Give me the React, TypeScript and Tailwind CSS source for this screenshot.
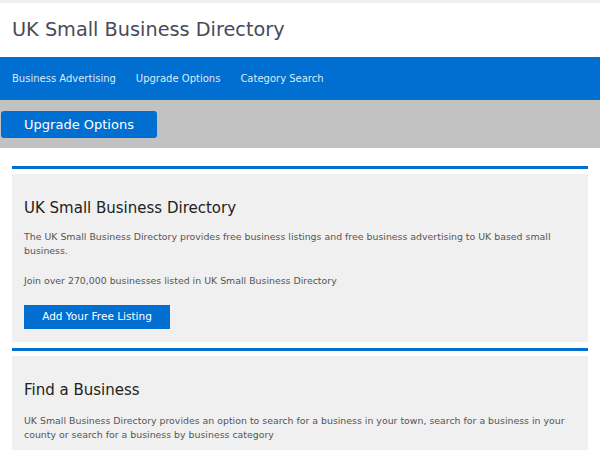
import React from "react";

const App = () => {
  return (
    <div className="min-h-[450px] bg-white font-['DejaVu_Sans',sans-serif]">
      <div className="h-[3px] bg-[#efefef]" />
      <div className="h-[54px] flex items-center px-3">
        <h1 className="text-[19.3px] text-[#4a4a57]">UK Small Business Directory</h1>
      </div>
      <nav className="bg-[#006fd1] h-[43px] flex items-center gap-[20px] px-3 text-[10px] text-[#dfe9f5]">
        <span>Business Advertising</span>
        <span>Upgrade Options</span>
        <span>Category Search</span>
      </nav>
      <div className="bg-[#c2c2c2] h-[48px] flex items-center px-px">
        <button className="bg-[#006fd1] text-white text-[13px] rounded-[3px] w-[156px] h-[27px] pt-px">
          Upgrade Options
        </button>
      </div>
      <div className="px-3 pt-[18px]">
        <div className="border-t-[3px] border-[#006fd1] pt-[5px]">
          <div className="bg-[#f0f0f0] px-3 pt-[24px] pb-[13px]">
            <h2 className="text-[15px] leading-[20px] text-[#222]">UK Small Business Directory</h2>
            <p className="mt-[12px] text-[9.4px] leading-[14px] text-[#555]">
              The UK Small Business Directory provides free business listings and free business advertising to UK based small business.
            </p>
            <p className="mt-[16px] text-[9.4px] leading-[14px] text-[#555]">
              Join over 270,000 businesses listed in UK Small Business Directory
            </p>
            <button className="mt-[17px] bg-[#006fd1] text-white text-[10.5px] w-[146px] h-[24px]">
              Add Your Free Listing
            </button>
          </div>
        </div>
        <div className="border-t-[3px] border-[#006fd1] pt-[5px] mt-[6px]">
          <div className="bg-[#f0f0f0] px-3 pt-[24px] pb-[16px]">
            <h2 className="text-[15px] leading-[20px] text-[#222]">Find a Business</h2>
            <p className="mt-[14px] text-[9.4px] leading-[14px] text-[#555]">
              UK Small Business Directory provides an option to search for a business in your town, search for a business in your county or search for a business by business category
            </p>
          </div>
        </div>
      </div>
    </div>
  );
};

export default App;
